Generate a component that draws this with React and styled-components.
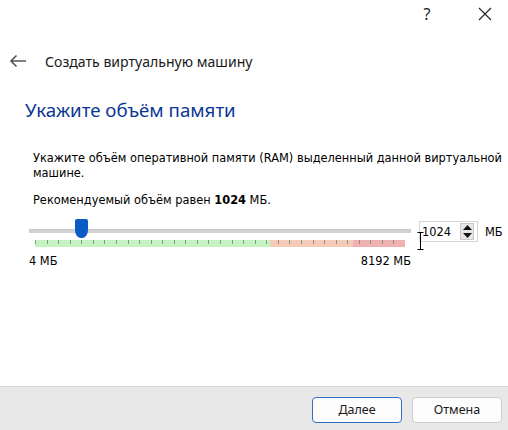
import React from "react";
import styled, { createGlobalStyle } from "styled-components";

const GlobalStyle = createGlobalStyle`
  html, body {
    margin: 0;
    padding: 0;
    background: #ffffff;
  }
  * {
    box-sizing: border-box;
  }
`;

const TICKS = 32;
const SCALE_W = 370;

export default function App() {
  const step = SCALE_W / TICKS;
  return (
    <Page>
      <GlobalStyle />
      <TitleBar>
        <TitleButton>?</TitleButton>
        <TitleButton>
          <svg width="14" height="14" viewBox="0 0 14 14">
            <path d="M1 1 L13 13 M13 1 L1 13" stroke="#222" strokeWidth="1.1" />
          </svg>
        </TitleButton>
      </TitleBar>

      <Header>
        <BackArrow>
          <svg width="18" height="14" viewBox="0 0 18 14">
            <path d="M17 7 H2 M7.5 1.5 L2 7 L7.5 12.5" stroke="#555" strokeWidth="1.6" fill="none" />
          </svg>
        </BackArrow>
        <HeaderTitle>Создать виртуальную машину</HeaderTitle>
      </Header>

      <Content>
        <Heading>Укажите объём памяти</Heading>
        <Body>
          <Para>
            Укажите объём оперативной памяти (RAM) выделенный данной виртуальной
            машине.
          </Para>
          <Para>
            Рекомендуемый объём равен <b>1024</b> МБ.
          </Para>

          <SliderRow>
            <SliderArea>
              <Groove>
                <Handle />
              </Groove>
              <Scale width={SCALE_W} height="7" viewBox={`0 0 ${SCALE_W} 7`}>
                <rect x="0" y="0" width="235" height="7" fill="#c4f2c0" />
                <rect x="235" y="0" width="83" height="7" fill="#f5cbb8" />
                <rect x="318" y="0" width="52" height="7" fill="#efb1b1" />
                {Array.from({ length: TICKS + 1 }).map((_, i) => (
                  <line
                    key={i}
                    x1={Math.round(i * step) + 0.5}
                    x2={Math.round(i * step) + 0.5}
                    y1="0"
                    y2="4"
                    stroke="#6b8a6b"
                    strokeOpacity="0.8"
                  />
                ))}
              </Scale>
              <Limits>
                <span>4 МБ</span>
                <span>8192 МБ</span>
              </Limits>
            </SliderArea>

            <SpinBox>
              <SpinValue>1024</SpinValue>
              <SpinButtons>
                <SpinBtn>
                  <svg width="9" height="5" viewBox="0 0 9 5"><path d="M0 5 L4.5 0 L9 5Z" fill="#111" /></svg>
                </SpinBtn>
                <SpinBtn>
                  <svg width="9" height="5" viewBox="0 0 9 5"><path d="M0 0 L9 0 L4.5 5Z" fill="#111" /></svg>
                </SpinBtn>
              </SpinButtons>
              <Cursor width="7" height="18" viewBox="0 0 7 18">
                <path d="M0.5 0.5 H6.5 M3.5 0.5 V17.5 M0.5 17.5 H6.5" stroke="#000" strokeWidth="1" fill="none" />
              </Cursor>
            </SpinBox>
            <Unit>МБ</Unit>
          </SliderRow>
        </Body>
      </Content>

      <Footer>
        <Button $primary>Далее</Button>
        <Button>Отмена</Button>
      </Footer>
    </Page>
  );
}

const Page = styled.div`
  width: 508px;
  height: 430px;
  display: flex;
  flex-direction: column;
  background: #ffffff;
  font-family: "DejaVu Sans", Verdana, sans-serif;
  color: #000;
  overflow: hidden;
`;

const TitleBar = styled.div`
  height: 28px;
  display: flex;
  justify-content: flex-end;
  align-items: center;
  padding-right: 10px;
  gap: 32px;
`;

const TitleButton = styled.div`
  width: 26px;
  display: flex;
  justify-content: center;
  align-items: center;
  font-family: "Noto Sans", sans-serif;
  font-size: 16px;
  color: #222;
`;

const Header = styled.div`
  height: 40px;
  margin-top: 13px;
  display: flex;
  align-items: center;
  padding-left: 9px;
`;

const BackArrow = styled.div`
  width: 36px;
  display: flex;
  align-items: center;
`;

const HeaderTitle = styled.div`
  font-family: "Noto Sans", "Open Sans", sans-serif;
  font-size: 14.1px;
  color: #1a1a1a;
`;

const Content = styled.div`
  padding-left: 25px;
  padding-top: 14px;
`;

const Heading = styled.h1`
  margin: 0;
  font-family: "Noto Sans", "Open Sans", sans-serif;
  font-weight: 400;
  font-size: 18.7px;
  color: #0c3796;
  line-height: 30px;
`;

const Body = styled.div`
  padding-left: 8px;
  padding-top: 26px;
`;

const Para = styled.p`
  margin: 0 0 12px;
  font-size: 11.4px;
  line-height: 15px;

  b {
    font-weight: 700;
  }
`;

const SliderRow = styled.div`
  display: flex;
  align-items: flex-start;
  margin-top: 2px;
  margin-left: -4px;
`;

const SliderArea = styled.div`
  width: 382px;
  display: flex;
  flex-direction: column;
`;

const Groove = styled.div`
  position: relative;
  height: 4px;
  margin-top: 9px;
  background: #d3d3d3;
  border-top: 1px solid #c8c8c8;
`;

const Handle = styled.div`
  position: absolute;
  left: 46px;
  top: -11px;
  width: 13px;
  height: 19px;
  background: #0a5bc4;
  border-radius: 2px 2px 6px 6px / 2px 2px 8px 8px;
`;

const Scale = styled.svg`
  display: block;
  margin-top: 7px;
  margin-left: 6px;
`;

const Limits = styled.div`
  display: flex;
  justify-content: space-between;
  margin-top: 7px;
  font-size: 11.4px;
`;

const SpinBox = styled.div`
  position: relative;
  width: 59px;
  height: 21px;
  margin-left: 8px;
  margin-top: 1px;
  border: 1px solid #d6d6d6;
  display: flex;
  align-items: center;
  background: #fff;
`;

const SpinValue = styled.div`
  flex: 1;
  padding-left: 2px;
  font-size: 11.4px;
`;

const SpinButtons = styled.div`
  width: 14px;
  height: 17px;
  margin-right: 3px;
  display: flex;
  flex-direction: column;
  border: 1px solid #c9c9c9;
  background: #e6e6e6;
`;

const SpinBtn = styled.div`
  flex: 1;
  display: flex;
  align-items: center;
  justify-content: center;
`;

const Cursor = styled.svg`
  position: absolute;
  left: -3px;
  top: 10px;
`;

const Unit = styled.div`
  margin-left: 7px;
  margin-top: 5px;
  font-size: 11.4px;
`;

const Footer = styled.div`
  margin-top: auto;
  height: 44px;
  border-top: 1px solid #d8d8d8;
  background: #e8e8e8;
  display: flex;
  align-items: center;
  justify-content: flex-end;
  gap: 10px;
  padding-right: 6px;
  padding-top: 2px;
`;

const Button = styled.button`
  width: 90px;
  height: 26px;
  border-radius: 4px;
  border: 1px solid ${(p) => (p.$primary ? "#2f73c0" : "#cdcdcd")};
  background: #fdfdfd;
  font-family: "Noto Sans", "Open Sans", sans-serif;
  font-size: 12.5px;
  color: #1a1a1a;
  padding: 0;
`;
